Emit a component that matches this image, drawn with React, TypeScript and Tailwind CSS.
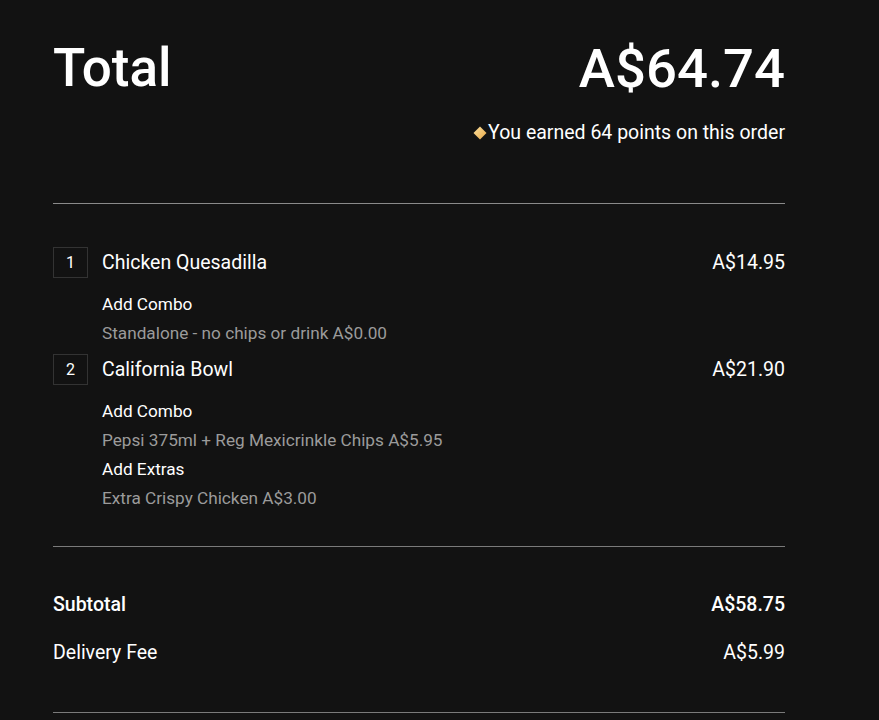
const items = [
  {
    qty: 1,
    name: "Chicken Quesadilla",
    price: "A$14.95",
    options: [{ label: "Add Combo", value: "Standalone - no chips or drink A$0.00" }],
  },
  {
    qty: 2,
    name: "California Bowl",
    price: "A$21.90",
    options: [
      { label: "Add Combo", value: "Pepsi 375ml + Reg Mexicrinkle Chips A$5.95" },
      { label: "Add Extras", value: "Extra Crispy Chicken A$3.00" },
    ],
  },
];

export default function App() {
  return (
    <div className="min-h-[720px] bg-[#121212] text-white font-['Roboto',sans-serif]">
      <div className="w-[732px] ml-[53px] pt-[42px]">
        <div className="flex items-center justify-between h-[53px]">
          <h1 className="text-[53px] leading-none font-medium">Total</h1>
          <div className="text-[54.5px] leading-none font-medium">A$64.74</div>
        </div>
        <div className="mt-[26px] flex items-center justify-end text-[19.5px] leading-[24px]">
          <svg width="14" height="14" viewBox="0 0 14 14" className="mr-[1px]">
            <defs>
              <linearGradient id="gold" x1="0" y1="0" x2="1" y2="1">
                <stop offset="0" stopColor="#fbe1a0" />
                <stop offset="1" stopColor="#e9a846" />
              </linearGradient>
            </defs>
            <path d="M7 0.5 L13.5 7 L7 13.5 L0.5 7 Z" fill="url(#gold)" />
          </svg>
          <span>You earned 64 points on this order</span>
        </div>

        <div className="mt-[58px] h-px bg-[#8a8a8a]" />

        <div className="mt-[43px] flex flex-col gap-[6px]">
          {items.map((item) => (
            <div key={item.qty}>
              <div className="flex items-center">
                <div className="w-[35px] h-[31px] border border-[#333] flex items-center justify-center text-[16px]">
                  {item.qty}
                </div>
                <div className="ml-[14px] flex-1 text-[19.5px] leading-[31px]">{item.name}</div>
                <div className="text-[19.5px] leading-[31px]">{item.price}</div>
              </div>
              <div className="mt-[12px] ml-[49px] text-[17.2px] leading-[29px]">
                {item.options.map((o) => (
                  <div key={o.label}>
                    <div className="text-white">{o.label}</div>
                    <div className="text-[#9b9b9b]">{o.value}</div>
                  </div>
                ))}
              </div>
            </div>
          ))}
        </div>

        <div className="mt-[33px] h-px bg-[#7a7a7a]" />

        <div className="mt-[46px] flex justify-between text-[19.5px] leading-[24px] font-medium">
          <span>Subtotal</span>
          <span>A$58.75</span>
        </div>
        <div className="mt-[24px] flex justify-between text-[19.5px] leading-[24px]">
          <span>Delivery Fee</span>
          <span>A$5.99</span>
        </div>

        <div className="mt-[47px] h-px bg-[#7a7a7a]" />
      </div>
    </div>
  );
}
